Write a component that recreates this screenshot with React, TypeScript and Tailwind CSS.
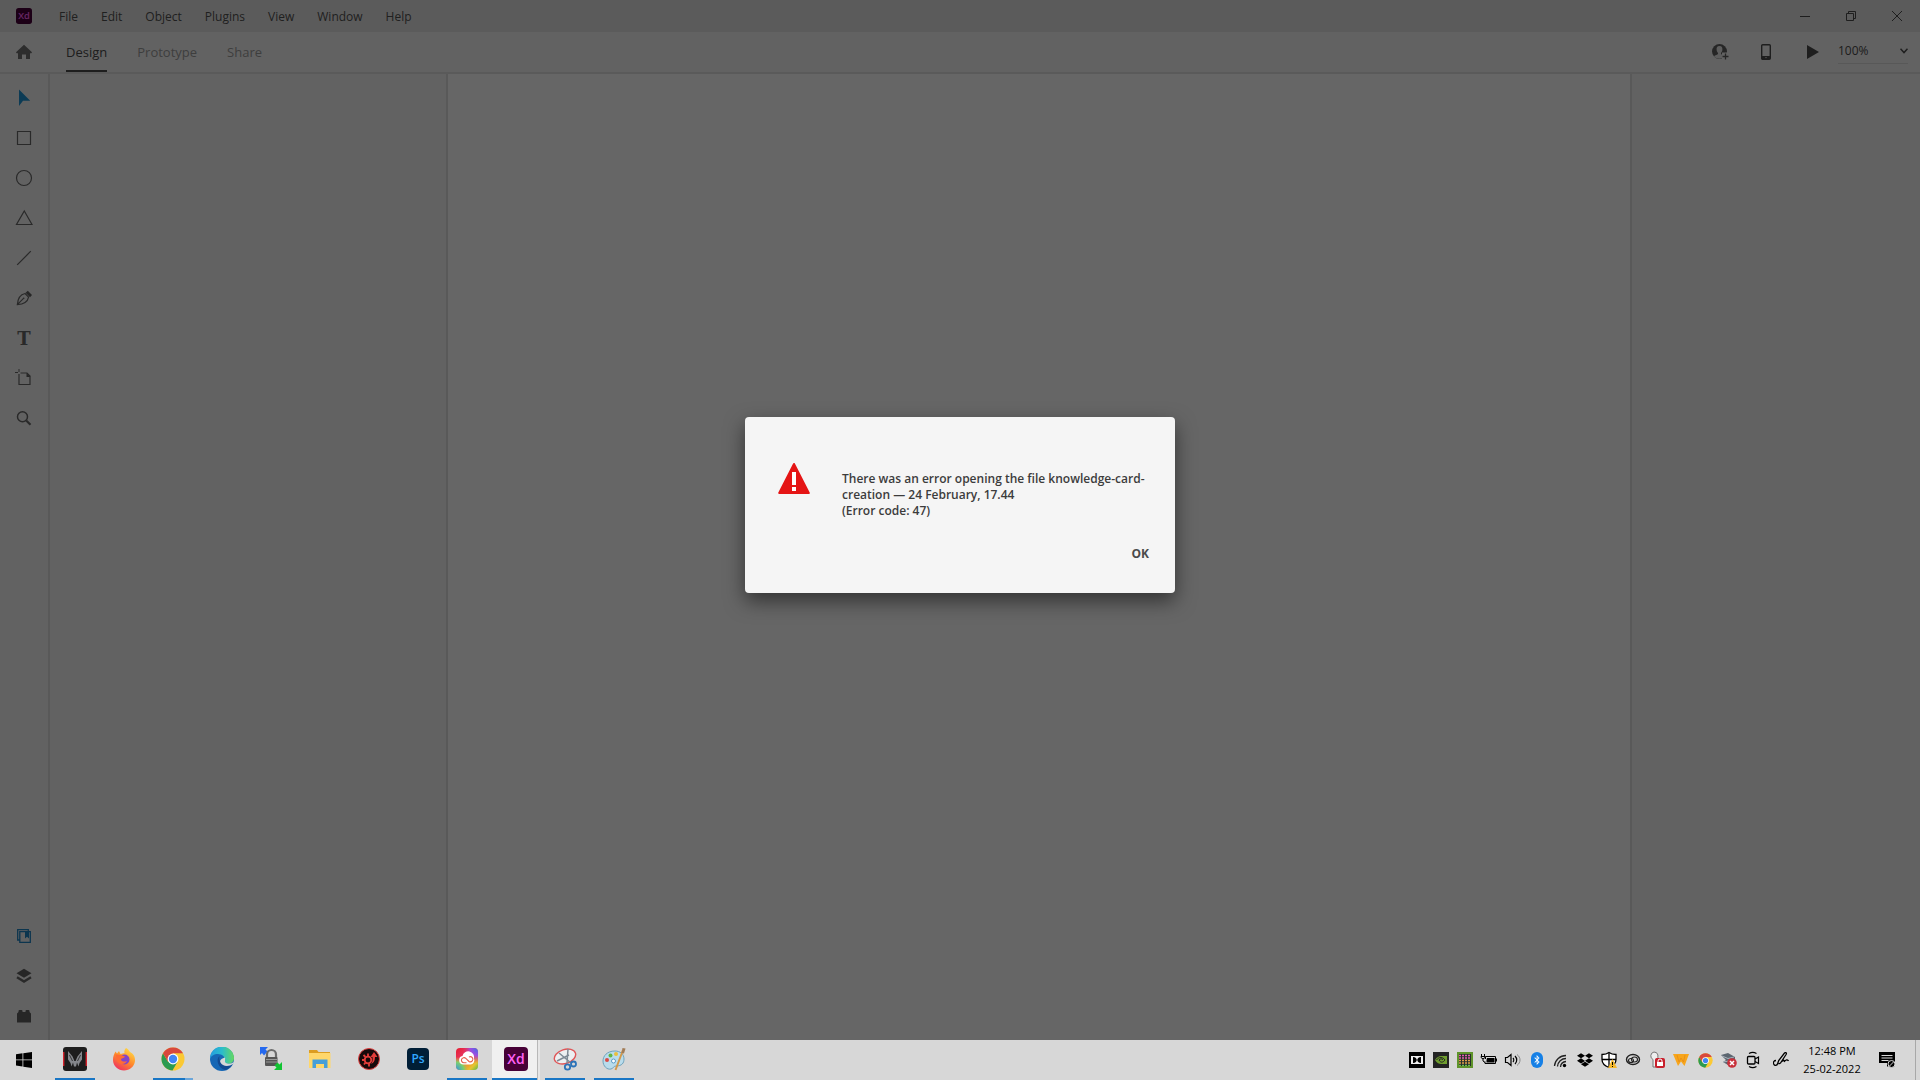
import type { ReactNode } from "react";
import { FaBluetoothB, FaDropbox } from "react-icons/fa6";

const menus = ["File", "Edit", "Object", "Plugins", "View", "Window", "Help"];

export default function App() {
  return (
    <div className="flex h-screen flex-col overflow-hidden font-['Open_Sans','Noto_Sans',sans-serif] text-[#4b4b4b]">
      <div className="relative flex min-h-0 flex-1 flex-col bg-[#f5f5f5]">
        <TitleBar />
        <Toolbar />
        <div className="flex min-h-0 flex-1">
          <ToolRail />
          <aside className="w-[398px] shrink-0 border-r-2 border-[#dedede]" />
          <main className="flex-1 bg-white" />
          <aside className="w-[290px] shrink-0 border-l-2 border-[#dedede]" />
        </div>
        <ErrorDialog />
      </div>
      <Taskbar />
    </div>
  );
}

function TitleBar() {
  return (
    <header className="flex h-8 shrink-0 items-center bg-[#e4e4e4] pl-4">
      <XdLogo size={16} />
      <nav className="ml-[27px] flex flex-1 gap-[23px] pt-0.5 text-xs text-[#505050]">
        {menus.map((m) => (
          <button key={m}>{m}</button>
        ))}
      </nav>
      <WindowButton label="Minimize">
        <path d="M0 5.5h10" />
      </WindowButton>
      <WindowButton label="Restore">
        <path d="M.5 2.5h7v7h-7zM2.5 2.5v-2h7v7h-2" />
      </WindowButton>
      <WindowButton label="Close">
        <path d="M0 0l10 10M10 0L0 10" />
      </WindowButton>
    </header>
  );
}

function WindowButton({ label, children }: { label: string; children: ReactNode }) {
  return (
    <button aria-label={label} className="flex h-8 w-[46px] items-center justify-center">
      <svg width="10" height="10" viewBox="0 0 10 10" fill="none" stroke="#4b4b4b" className="overflow-visible">
        {children}
      </svg>
    </button>
  );
}

function Toolbar() {
  return (
    <div className="flex h-[42px] shrink-0 items-center border-b-2 border-[#e2e2e2] pr-3 pl-4">
      <button aria-label="Home">
        <svg width="16" height="16" viewBox="0 0 16 16" fill="#707070">
          <path d="M8 .8 0 8.2l.6 1H2V15h4v-4.6h4V15h4V9.2h1.4l.6-1z" />
        </svg>
      </button>
      <nav className="ml-[34px] flex h-full flex-1 gap-[30px] text-[13px]">
        <button className="h-full border-b-2 border-[#4b4b4b] pt-1">Design</button>
        <button className="h-full border-b-2 border-transparent pt-1 text-[#9c9c9c]">Prototype</button>
        <button className="h-full border-b-2 border-transparent pt-1 text-[#9c9c9c]">Share</button>
      </nav>
      <button aria-label="Invite to document" className="mr-8">
        <svg width="17" height="17" viewBox="0 0 17 17">
          <circle cx="7.5" cy="7.5" r="7.5" fill="#606060" />
          <path d="M7.5 2C5 2 4.200 4 4.700 6.400c.2 1.200 1 1.800 1.300 2.600.2 1-.3 1.500-1.600 2-1 .4-2 .8-2.400 1.400 2.800 3 8.200 3 11 0-.5-.6-1.400-1-2.400-1.400-1.300-.5-1.800-1-1.600-2 .3-.8 1.100-1.400 1.300-2.600C10.800 4 10 2 7.500 2z" fill="#e8e8e8" />
          <path d="M10 8.500h7v8h-7z" fill="#f5f5f5" />
          <path d="M13.500 9.500v6M10.500 12.500h6" stroke="#606060" strokeWidth="1.300" />
        </svg>
      </button>
      <button aria-label="Mobile preview" className="mr-9">
        <svg width="10" height="16" viewBox="0 0 10 16">
          <rect x=".7" y=".7" width="8.600" height="14.600" rx="1" fill="none" stroke="#4b4b4b" strokeWidth="1.400" />
          <path d="M1 12h8v3H1z" fill="#4b4b4b" />
          <circle cx="5" cy="13.600" r=".7" fill="#f5f5f5" />
        </svg>
      </button>
      <button aria-label="Desktop preview" className="mr-[19px]">
        <svg width="12" height="14" viewBox="0 0 12 14" fill="#4b4b4b">
          <path d="M0 0l12 7-12 7z" />
        </svg>
      </button>
      <div className="mb-0.5 grid w-[70px] items-center border-b border-[#dcdcdc]">
        <select
          aria-label="Zoom"
          defaultValue="100%"
          className="col-start-1 row-start-1 h-6 w-full appearance-none bg-transparent text-xs"
        >
          <option>50%</option>
          <option>100%</option>
          <option>200%</option>
        </select>
        <svg width="8" height="6" viewBox="0 0 8 6" fill="none" stroke="#4b4b4b" strokeWidth="1.500" className="pointer-events-none col-start-1 row-start-1 justify-self-end">
          <path d="M.5.800 4 4.600 7.500.800" />
        </svg>
      </div>
    </div>
  );
}

function Tool({ label, children }: { label: string; children: ReactNode }) {
  return (
    <button aria-label={label} className="flex h-10 w-12 items-center justify-center">
      <svg width="18" height="18" viewBox="0 0 18 18" fill="none" stroke="#686868" strokeWidth="1.200">
        {children}
      </svg>
    </button>
  );
}

function ToolRail() {
  return (
    <aside className="flex w-[50px] shrink-0 flex-col border-r-2 border-[#dedede] py-1">
      <Tool label="Select">
        <path d="M4 .5v16.500l4-5.300h7.200z" fill="#1f94d4" stroke="none" />
      </Tool>
      <Tool label="Rectangle">
        <path d="M2.500 2.500h13v13h-13z" />
      </Tool>
      <Tool label="Ellipse">
        <circle cx="9" cy="9" r="7.500" />
      </Tool>
      <Tool label="Polygon">
        <path d="M9.300 2 17 15.500H1.500z" />
      </Tool>
      <Tool label="Line">
        <path d="M2.200 15.800 15.800 2.200" />
      </Tool>
      <Tool label="Pen">
        <path d="M2.300 15.700C2.800 9.500 5 5.500 10 4.500l3.600 3.600c-1 4.800-5 7.200-11.300 7.600zM2.300 15.700l6-6" />
        <circle cx="8.700" cy="9.300" r=".8" fill="#606060" stroke="none" />
        <path d="m10.600 3.800 2.200-2 4.200 4.200-2 2.200z" fill="#606060" stroke="none" />
      </Tool>
      <button aria-label="Text" className="h-10 w-12 font-['DejaVu_Serif',serif] text-[18px] font-bold text-[#686868]">
        T
      </button>
      <Tool label="Artboard">
        <path d="M4 0v3M0 3.500h3" strokeWidth="1" />
        <path d="M4 5v10.500h11V7l-3-3H5.500" />
        <path d="M11.500 4v4h4z" fill="#606060" stroke="none" />
      </Tool>
      <Tool label="Zoom">
        <circle cx="7.500" cy="7.800" r="5" strokeWidth="1.500" />
        <path d="m11.200 11.500 4.300 4.200" strokeWidth="2.200" />
      </Tool>
      <div className="flex-1" />
      <Tool label="Libraries">
        <path d="M4.800 4.700h10.500v10.600H4.800zM4.500 13H2.700V2.700h10.600v2" stroke="#1f84c4" strokeWidth="1.300" />
        <path d="M10 5h4v6.500l-2-1.700-2 1.700z" fill="#1f84c4" stroke="none" />
      </Tool>
      <Tool label="Layers">
        <path d="m9 1.800 7.500 4.500L9 10.800 1.500 6.300z" fill="#606060" stroke="none" />
        <path d="m2 10.200 7 4.400 7-4.400" strokeWidth="2.400" />
      </Tool>
      <Tool label="Plugins">
        <path d="M2 15.500V6.500L3.500 5V4q0-1 1-1h2q1 0 1 1v1h3V4q0-1 1-1h2q1 0 1 1v1L16 6.500v9z" fill="#606060" stroke="none" />
      </Tool>
    </aside>
  );
}

function ErrorDialog() {
  return (
    <div className="absolute inset-0 flex items-center justify-center bg-black/60 pb-[30px]">
      <div
        role="alertdialog"
        aria-labelledby="error-text"
        className="flex h-44 w-[430px] flex-col rounded-[4px] bg-[#f5f5f5] pt-[45px] pr-[18px] pl-[33px] shadow-[0_8px_20px_rgba(0,0,0,0.5)]"
      >
        <div className="flex flex-1 gap-8">
          <svg width="32" height="32" viewBox="0 0 32 32" className="shrink-0">
            <path d="M16 2 30.800 31H1.200z" fill="#e51515" stroke="#e51515" strokeWidth="2" strokeLinejoin="round" />
            <path d="M14 10h4v13h-4zM14 25h4v4h-4z" fill="#fff" />
          </svg>
          <p id="error-text" className="pt-[9px] text-xs/4 font-semibold whitespace-nowrap text-[#3c3c3c]">
            There was an error opening the file knowledge-card-
            <br />
            creation — 24 February, 17.44
            <br />
            (Error code: 47)
          </p>
        </div>
        <button className="mb-[27px] self-end px-2 py-1 text-xs/4 font-bold">OK</button>
      </div>
    </div>
  );
}

function XdLogo({ size }: { size: number }) {
  return (
    <svg width={size} height={size} viewBox="0 0 24 24" className="shrink-0">
      <rect width="24" height="24" rx="4" fill="#470137" />
      <text x="12" y="17" textAnchor="middle" fontSize="14" fontWeight="600" fill="#ff61f6">
        Xd
      </text>
    </svg>
  );
}

function ChromeLogo({ size }: { size: number }) {
  return (
    <svg width={size} height={size} viewBox="0 0 24 24">
      <circle cx="12" cy="12" r="11.500" fill="#fbc934" />
      <path d="M12 12 2 6.300A11.500 11.500 0 0 1 22 6.300H12z" fill="#d8483c" />
      <path d="M2 6.300A11.500 11.500 0 0 0 11.500 23.500L16.500 14.800 12 12 7 14.800z" fill="#2c9b50" />
      <path d="M2 6.300 7 14.800 12 6.300z" fill="#d8483c" />
      <circle cx="12" cy="12" r="5.400" fill="#fff" />
      <circle cx="12" cy="12" r="4.200" fill="#4285f4" />
    </svg>
  );
}

function Task({ label, open = false, children }: { label: string; open?: boolean; children: ReactNode }) {
  return (
    <button aria-label={label} className="flex h-10 w-12 flex-col items-center">
      <span className="flex flex-1 items-center">{children}</span>
      <span className={open ? "h-0.5 w-10 bg-[#1976c5]" : "h-0.5 w-10"} />
    </button>
  );
}

function Taskbar() {
  return (
    <footer className="flex h-10 shrink-0 items-center bg-[#d7d7d7] text-black">
      <button aria-label="Start" className="flex h-10 w-[51px] items-center pl-4">
        <svg width="16" height="16" viewBox="0 0 16 16">
          <path d="M0 2.200 6.500 1.300v6.200H0zM7.300 1.200 16 0v7.500H7.300zM0 8.300h6.500v6.200L0 13.600zM7.300 8.300H16V16l-8.700-1.200z" />
        </svg>
      </button>
      <div className="flex flex-1 gap-px">
        <Task label="PredatorSense" open>
          <svg width="24" height="24" viewBox="0 0 24 24">
            <rect width="24" height="24" rx="3" fill="#1d1d1d" />
            <path d="M.7 5v14M23.300 5v14" stroke="#d3212b" strokeWidth="1.400" />
            <path d="m5 4 4.500 5.500L11 13l.3 1h1.400l.3-1 1.500-3.500L19 4v8.500l-2.500 3.500-1 3.500-1.500-4-1 4h-2l-1-4-1.500 4-1-3.500L5 12.500z" fill="#85878c" />
            <path d="m6.500 8 3 6M17.500 8l-3 6" stroke="#1d1d1d" strokeWidth=".8" />
          </svg>
        </Task>
        <Task label="Firefox">
          <svg width="24" height="24" viewBox="0 0 24 24">
            <defs>
              <linearGradient id="fox" x1="0.800" y1="0" x2="0.200" y2="1">
                <stop offset="0" stopColor="#ffe14a" />
                <stop offset="0.500" stopColor="#ff8a2a" />
                <stop offset="1" stopColor="#ee2a65" />
              </linearGradient>
            </defs>
            <path d="M14 1c2 1 3 2.500 4 4 3.500 1.500 5.300 5 5 9-.6 5.500-5.300 9.500-11 9.500S1 19 1 13c0-3.500 1-6 2.500-8.500L5 6.500 7 4l1.500 3 4-1c-.5-2 .2-4 1.500-5z" fill="url(#fox)" />
            <circle cx="12.500" cy="12.500" r="5" fill="#8344c9" />
            <path d="M3.500 7.500 9 8l4 1.500c-1 2-4 1.500-4 3s3 3 6 1.500c-2 5-10 3.500-10.500-2z" fill="#ff6b35" />
          </svg>
        </Task>
        <button aria-label="Chrome" className="flex h-10 w-12 flex-col items-center">
          <span className="flex flex-1 items-center">
            <ChromeLogo size={24} />
          </span>
          <span className="flex h-0.5 w-10 bg-[#6ba6da]">
            <span className="w-8 bg-[#1976c5]" />
          </span>
        </button>
        <Task label="Edge">
          <svg width="24" height="24" viewBox="0 0 24 24">
            <defs>
              <linearGradient id="edge" x1="0" y1="0.300" x2="1" y2="0.300">
                <stop offset="0" stopColor="#249de0" />
                <stop offset="0.500" stopColor="#2bbccb" />
                <stop offset="1" stopColor="#65d85f" />
              </linearGradient>
            </defs>
            <circle cx="12" cy="12" r="12" fill="#1667b5" />
            <path d="M0 12A12 12 0 0 1 24 11c0 4.500-4 6.500-7.500 5.500-2-.6-2.500-1.500-1.500-3C16 11 12.500 7 8 7c-4 0-7 2-8 5z" fill="url(#edge)" />
            <path d="M9.500 9C5.500 12 8 21 15 23c3-.8 5.500-2.800 7.200-5.500C16 21 8 17 9.500 9z" fill="#134a91" />
            <path d="M15 10.500c-4 1-5.500 3-4.500 5 2 4.300 8.500 4.300 12.500 1.500l1-2.500c-2 2.500-6 2.700-8 1.500-1.800-1.200-.5-2.500-1-5.500z" fill="#d7d7d7" />
          </svg>
        </Task>
        <Task label="File transfer">
          <svg width="24" height="24" viewBox="0 0 24 24">
            <path d="M1 0h8L6.500 2.500l2 2-3.500 4-2-2.500L1 8z" fill="#2569ef" />
            <path d="M8 11V7.500a4.500 4.500 0 0 1 9 0V11" fill="none" stroke="#6c6c6c" strokeWidth="2.200" />
            <rect x="6" y="10" width="12.500" height="9" rx="1" fill="#555" />
            <path d="M7 12.500h11M7 15h11" stroke="#999" />
            <path d="M23 23h-8l2.500-2.500-2-2 3-3 2 2L23 15z" fill="#12c433" />
          </svg>
        </Task>
        <Task label="File Explorer">
          <svg width="24" height="24" viewBox="0 0 24 24">
            <path d="M1 3h8l1.500 2H22v4H1z" fill="#dc9d21" />
            <path d="M1 6h21.500v15H1z" fill="#ffd76b" />
            <path d="M4.500 21v-8.500h15V21H16v-4H8v4z" fill="#469fd8" />
          </svg>
        </Task>
        <Task label="Driver tool">
          <svg width="24" height="24" viewBox="0 0 24 24">
            <circle cx="12" cy="12" r="10.500" fill="#18090a" stroke="#e04444" />
            <circle cx="11" cy="13" r="3.300" fill="none" stroke="#e23d3a" strokeWidth="1.800" />
            <path d="m6.500 8 2 2M5 13h3M7 17.500l1.500-2M11 6.500V9M12 17v2.500" stroke="#e23d3a" strokeWidth="1.800" />
            <path d="m17 5 3.500 5H18c0 4-1.500 6-4 7 1.500-2 2-4 1.500-7h-2z" fill="#e23d3a" />
          </svg>
        </Task>
        <Task label="Photoshop">
          <svg width="22" height="22" viewBox="0 0 22 22">
            <rect width="22" height="22" rx="4" fill="#001e36" />
            <text x="11" y="15" textAnchor="middle" fontSize="12" fontWeight="600" fill="#31a8ff">
              Ps
            </text>
          </svg>
        </Task>
        <Task label="Creative Cloud" open>
          <svg width="22" height="22" viewBox="0 0 22 22">
            <defs>
              <linearGradient id="cc" x1="0" y1="0" x2="1" y2="1">
                <stop offset="0" stopColor="#e61c30" />
                <stop offset="0.300" stopColor="#e8335b" />
                <stop offset="0.600" stopColor="#f28a2d" />
                <stop offset="0.800" stopColor="#e5c531" />
                <stop offset="1" stopColor="#58b947" />
              </linearGradient>
              <radialGradient id="cc-violet" cx="1" cy="0" r="0.700">
                <stop offset="0" stopColor="#3b6fe8" />
                <stop offset="0.500" stopColor="#a04be0" />
                <stop offset="1" stopColor="#e8335b" stopOpacity="0" />
              </radialGradient>
              <radialGradient id="cc-blue" cx="0" cy="1" r="0.600">
                <stop offset="0" stopColor="#2f95e8" />
                <stop offset="0.600" stopColor="#7fcf6a" />
                <stop offset="1" stopColor="#f2b22d" stopOpacity="0" />
              </radialGradient>
            </defs>
            <rect width="22" height="22" rx="4" fill="url(#cc)" />
            <rect width="22" height="22" rx="4" fill="url(#cc-violet)" />
            <rect width="22" height="22" rx="4" fill="url(#cc-blue)" />
            <path d="M7.500 16.500a4.300 4.300 0 0 1-1-8.500 5.800 5.800 0 0 1 11.500 2.500 4.300 4.300 0 0 1-3.500 6z" fill="#fff" />
            <path d="M10.500 14.800H8a2.600 2.600 0 1 1 1.800-4.500l3.200 3.200a2.600 2.600 0 1 0 0-4.500" fill="none" stroke="#e65f4a" strokeWidth="1.100" />
          </svg>
        </Task>
        <button aria-label="Adobe XD" className="flex h-10 w-12 border-r-2 border-[#e6e6e6]">
          <span className="flex h-10 flex-1 flex-col items-center border-r border-[#b8b8b8] bg-[#f0f0f0]">
            <span className="flex flex-1 items-center pl-0.5">
              <XdLogo size={24} />
            </span>
            <span className="h-0.5 w-full bg-[#1976c5]" />
          </span>
        </button>
        <Task label="Snipping Tool" open>
          <svg width="24" height="24" viewBox="0 0 24 24" fill="none">
            <ellipse cx="12" cy="9.500" rx="11" ry="7" transform="rotate(-18 12 9.500)" fill="#eceff1" stroke="#df5658" strokeWidth="1.400" />
            <path d="m6 6 12 10M15 2l-1 14M4 14l12-6" stroke="#7e8a95" strokeWidth="1.500" />
            <circle cx="14.500" cy="20" r="2.700" stroke="#2c73b8" strokeWidth="1.800" />
            <circle cx="20.500" cy="17" r="2.500" stroke="#2c73b8" strokeWidth="1.800" />
          </svg>
        </Task>
        <Task label="Paint" open>
          <svg width="24" height="24" viewBox="0 0 24 24">
            <path d="M13 4C5 4 1 9 1 14c0 5 4 9 8 8 3-.7 2-3 5-3 6 0 8-3 8-7 0-5-4-8-9-8z" fill="#b9dcec" stroke="#6fa3bd" />
            <circle cx="5" cy="13" r="2" fill="#d94a45" />
            <circle cx="8.500" cy="8.500" r="2" fill="#62b548" />
            <circle cx="14" cy="7" r="2" fill="#eabf3d" />
            <circle cx="11.500" cy="14" r="2" fill="#fff" stroke="#5c9bc5" />
            <path d="M21 3 13.500 23" stroke="#d39849" strokeWidth="2" />
            <path d="m19.500 6 1-5 3 .5-1.500 5z" fill="#a27c56" />
          </svg>
        </Task>
      </div>
      <Tray />
      <button className="flex h-10 w-[70px] flex-col items-center justify-center text-[11px]/[18px] whitespace-nowrap">
        <span>12:48 PM</span>
        <span>25-02-2022</span>
      </button>
      <button aria-label="Notifications" className="mr-1 flex h-10 w-[49px] items-center justify-center border-r border-[#a8a8a8] pr-2">
        <svg width="18" height="18" viewBox="0 0 18 18">
          <path d="M1 1h16v11h-4l-4 4v-4H1z" />
          <path d="M3.500 4.500h11M3.500 7h11M3.500 9.500h7" stroke="#d7d7d7" />
          <circle cx="13.500" cy="13" r="3.500" stroke="#d7d7d7" />
          <path d="m11.500 15 4-4" stroke="#d7d7d7" />
        </svg>
      </button>
    </footer>
  );
}

function TrayIcon({ label, children }: { label: string; children: ReactNode }) {
  return (
    <button aria-label={label} className="flex h-10 w-6 items-center justify-center">
      <svg width="16" height="16" viewBox="0 0 16 16" fill="none" className="overflow-visible">
        {children}
      </svg>
    </button>
  );
}

function Tray() {
  return (
    <div className="flex">
      <TrayIcon label="Dolby">
        <path d="M0 0h16v16H0z" fill="#000" />
        <path d="M2 4h12v8H2z" fill="#eee" />
        <path d="M4 5c5 0 5 6 0 6zM12 5c-5 0-5 6 0 6z" fill="#000" />
      </TrayIcon>
      <TrayIcon label="NVIDIA">
        <path d="M0 0h16v16H0z" fill="#232323" />
        <path d="M2 8c2-3 4-4 6-4h6v8H8c-2 0-4-1-6-4z" fill="#6f9e2e" />
        <path d="M3.500 8C6 4.500 10 5 12 8c-2 2.700-4.500 3-6 0 1.500-1.500 3-1.500 4 0" stroke="#232323" />
      </TrayIcon>
      <TrayIcon label="Memory">
        <path d="M0 0h16v16H0z" fill="#5f942b" />
        <path d="M2 2h12v12H2z" fill="#26312a" />
        <path d="M2 3.500h12M2 6h12" stroke="#e45fae" strokeWidth="1.500" strokeDasharray="2 1" />
        <path d="M2 8.500h12M2 11h12" stroke="#e0a14b" strokeWidth="1.500" strokeDasharray="2 1" />
        <path d="M2 13.300h12" stroke="#80e060" strokeDasharray="2 1" />
      </TrayIcon>
      <TrayIcon label="Battery">
        <path d="M4.500 7V4.500h10v7H4v-2M15.500 6.500v3" stroke="#000" />
        <path d="M6 6h7.500v4.500H5.500V8z" fill="#000" />
        <path d="M.5 2v2M3.500 2v2M0 4.500h4v1L2 7 0 5.500zM2 6v3l2 1.500" stroke="#000" />
      </TrayIcon>
      <TrayIcon label="Volume">
        <path d="M.5 5.500h2L6 2.500v11l-3.500-3h-2zM8 6c1 1 1 3 0 4M10 4c2.300 2.200 2.300 5.800 0 8" stroke="#000" strokeWidth="1.200" />
        <path d="M12 2.500c4 3 4 8 0 11" stroke="#888" />
      </TrayIcon>
      <TrayIcon label="Bluetooth">
        <rect x="2" width="12" height="16" rx="6" fill="#1680e6" />
        <FaBluetoothB x="3" y="3" size="10" color="#fff" />
      </TrayIcon>
      <TrayIcon label="Wi-Fi">
        <path d="M1.500 14C2 8 7 3.500 13 3.500M4.500 14.500c.3-4.500 4-8 8.500-8M7.500 15c.3-3 2.500-5.300 5.500-5.500" stroke="#222" strokeWidth="1.300" />
        <circle cx="11.500" cy="13.500" r="1.700" fill="#000" />
      </TrayIcon>
      <TrayIcon label="Dropbox">
        <FaDropbox size="16" color="#000" />
      </TrayIcon>
      <TrayIcon label="Security">
        <path d="M8 .5C6 2 3.500 2.500 1 2.500v5c0 4 3 6.500 7 8 4-1.500 7-4 7-8v-5c-2.500 0-5-.5-7-2z" fill="#fff" stroke="#000" strokeWidth="1.300" />
        <path d="M8 1v14M1 7.500h14" stroke="#000" strokeWidth="1.300" />
        <path d="m11.500 7 4.500 9H7z" fill="#f5b92e" />
        <path d="M11.500 10v3M11.500 14v1" stroke="#000" />
      </TrayIcon>
      <TrayIcon label="Creative Cloud status">
        <ellipse cx="8" cy="7.500" rx="6.500" ry="5" stroke="#222" strokeWidth="1.400" />
        <ellipse cx="6" cy="8.500" rx="2.500" ry="2" stroke="#222" strokeWidth="1.100" />
        <ellipse cx="9.500" cy="7.500" rx="3" ry="2.500" stroke="#222" strokeWidth="1.100" />
      </TrayIcon>
      <TrayIcon label="VPN">
        <path d="M5 0a4 4 0 0 1 2 7.500V15H4V7.500A4 4 0 0 1 5 0z" fill="#eee" stroke="#777" />
        <rect x="6" y="6" width="10" height="10" rx="2" fill="#c8202c" />
        <path d="M9 10V9a2 2 0 0 1 4 0v1" stroke="#fff" />
        <path d="M8 10h6v4H8z" fill="#fff" />
      </TrayIcon>
      <TrayIcon label="WatchGuard">
        <path d="M0 2h16l-4.500 12L8 9.500 5 14z" fill="#f7a51b" />
        <path d="m4 3 2 7L8 6l2.500 4L12 3" stroke="#e58a18" strokeWidth=".8" />
      </TrayIcon>
      <button aria-label="Chrome background" className="flex h-10 w-6 items-center justify-center">
        <ChromeLogo size={15} />
      </button>
      <TrayIcon label="Disconnected">
        <path d="m0 3 7-2 7 4v5l-7 3-5-3 3-2z" fill="#5c6670" />
        <path d="m1 4 6 2.500 6-1.500M2 10l6-1" stroke="#a9b3bd" />
        <circle cx="11" cy="11" r="4.800" fill="#c8303a" />
        <path d="m9 9 4 4m0-4-4 4" stroke="#fff" strokeWidth="1.500" />
      </TrayIcon>
      <TrayIcon label="Meet Now">
        <rect x="2.500" y="4.500" width="7.500" height="7.500" rx="1" stroke="#000" strokeWidth="1.300" />
        <path d="m10 7 3.500-2v6.500L10 9.500M4 1.500C6.500 0 9 0 11.500 1.500M4 14.500c2.500 1.500 5 1.500 7.500 0" stroke="#000" strokeWidth="1.200" />
      </TrayIcon>
      <button aria-label="Windows Ink" className="flex h-10 w-8 items-center justify-center">
        <svg width="16" height="16" viewBox="0 0 16 16" fill="none" stroke="#000" strokeWidth="1.300">
          <path d="M3 8.500C1 8.500 0 10 .7 12c.8 2 3.300 2 4-.5l1-3L11.500 1c1.300-1 2.300 0 1.700 1.300L7.500 11l-2 1M9 9.500c1.500-2 3-1.500 2 .5M11 10c2-3 3.500-2.500 4.500-1" />
        </svg>
      </button>
    </div>
  );
}
